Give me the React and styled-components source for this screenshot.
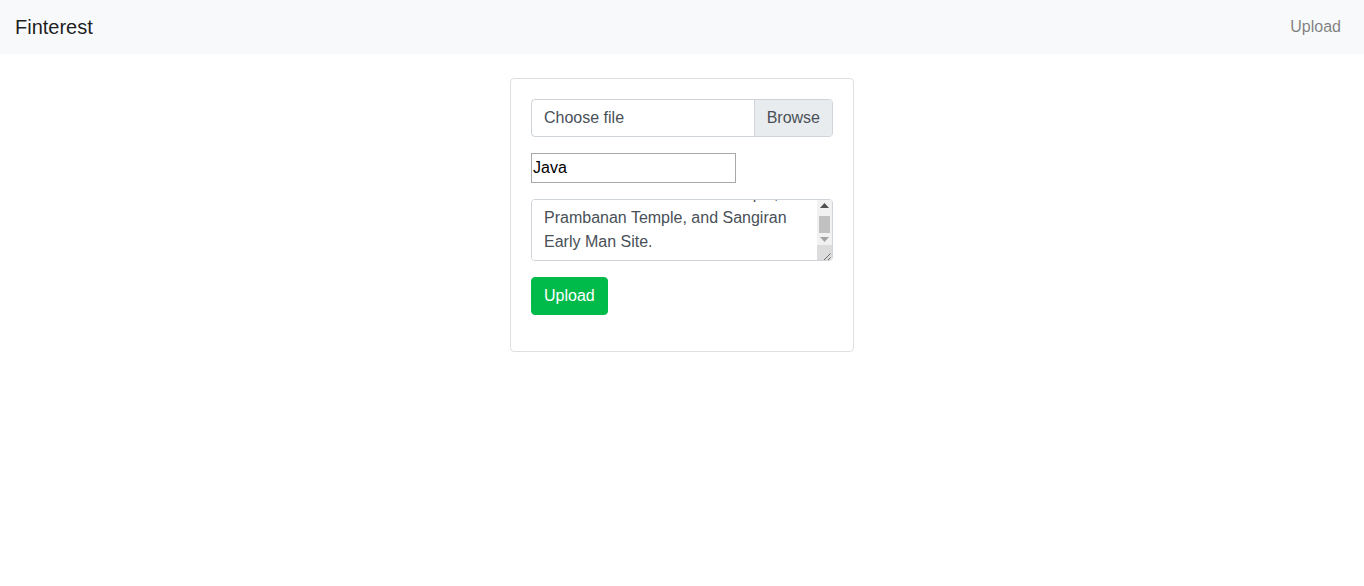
import React, { useEffect, useRef } from 'react';
import styled, { createGlobalStyle } from 'styled-components';

const GlobalStyle = createGlobalStyle`
  * { box-sizing: border-box; }
  body {
    margin: 0;
    background: #fff;
    font-family: "Liberation Sans", Arial, sans-serif;
    font-size: 16px;
    line-height: 1.5;
    color: #212529;
  }
`;

const NavBar = styled.nav`
  height: 54px;
  background: #f8f9fa;
  display: flex;
  align-items: center;
  justify-content: space-between;
  padding: 0 16px 0 15px;
`;

const Brand = styled.a`
  font-size: 20px;
  color: rgba(0, 0, 0, 0.9);
  text-decoration: none;
  line-height: 30px;
`;

const NavLink = styled.a`
  color: rgba(0, 0, 0, 0.5);
  text-decoration: none;
  padding: 8px 7px;
`;

const Main = styled.main`
  display: flex;
  justify-content: center;
  padding-top: 24px;
`;

const Card = styled.div`
  width: 344px;
  border: 1px solid rgba(0, 0, 0, 0.125);
  border-radius: 4px;
  padding: 20px;
`;

const Group = styled.div`
  margin-bottom: ${p => p.$mb ?? 16}px;
`;

const FileBox = styled.label`
  display: flex;
  height: 38px;
  border: 1px solid #ced4da;
  border-radius: 4px;
  overflow: hidden;
  color: #495057;
`;

const FileName = styled.span`
  flex: 1;
  padding: 6px 12px;
  line-height: 24px;
`;

const BrowseBtn = styled.span`
  background: #e9ecef;
  border-left: 1px solid #ced4da;
  padding: 6px 12px;
  line-height: 24px;
`;

const TitleInput = styled.input`
  width: 205px;
  height: 30px;
  border: 1px solid #a9a9a9;
  padding: 2px 1px;
  font: inherit;
  color: #000;
  display: block;
  outline: none;
`;

const AreaWrap = styled.div`
  position: relative;
`;

const TextArea = styled.textarea`
  display: block;
  width: 100%;
  height: 62px;
  padding: 6px 27px 6px 12px;
  border: 1px solid #ced4da;
  border-radius: 4px;
  font: inherit;
  line-height: 24px;
  color: #495057;
  resize: none;
  overflow-y: scroll;
  scrollbar-width: none;
  &::-webkit-scrollbar { display: none; }
`;

const ScrollBar = styled.div`
  position: absolute;
  top: 1px;
  right: 1px;
  bottom: 1px;
  width: 15px;
  display: flex;
  flex-direction: column;
  background: #f1f1f1;
  border-top-right-radius: 3px;
  border-bottom-right-radius: 3px;
  overflow: hidden;
  pointer-events: none;
`;

const ArrowBtn = styled.div`
  height: 11px;
  display: flex;
  align-items: center;
  justify-content: center;
`;

const Track = styled.div`
  flex: 1;
  display: flex;
  flex-direction: column;
  justify-content: flex-end;
  padding: 0 2px 1px;
`;

const Thumb = styled.div`
  height: 17px;
  background: #c1c1c1;
`;

const Corner = styled.div`
  height: 15px;
  background: #dcdcdc;
`;

const SubmitBtn = styled.button`
  background: #00ba4a;
  color: #fff;
  border: 1px solid #00ba4a;
  border-radius: 4px;
  padding: 6px 12px;
  font: inherit;
  line-height: 24px;
  cursor: pointer;
`;

const description =
  'Java is an island of Indonesia. It is home to UNESCO World Heritage Sites such as Borobudur Temple, Prambanan Temple, and Sangiran Early Man Site.';

export default function App() {
  const areaRef = useRef(null);

  useEffect(() => {
    if (areaRef.current) areaRef.current.scrollTop = areaRef.current.scrollHeight;
  }, []);

  return (
    <>
      <GlobalStyle />
      <NavBar>
        <Brand href="#">Finterest</Brand>
        <NavLink href="#">Upload</NavLink>
      </NavBar>
      <Main>
        <Card>
          <form onSubmit={e => e.preventDefault()}>
            <Group>
              <FileBox>
                <FileName>Choose file</FileName>
                <BrowseBtn>Browse</BrowseBtn>
              </FileBox>
            </Group>
            <Group>
              <TitleInput defaultValue="Java" />
            </Group>
            <Group>
              <AreaWrap>
                <TextArea ref={areaRef} rows={2} defaultValue={description} />
                <ScrollBar>
                  <ArrowBtn>
                    <svg width="9" height="5" viewBox="0 0 9 5"><polygon points="0,5 4.5,0 9,5" fill="#505050" /></svg>
                  </ArrowBtn>
                  <Track><Thumb /></Track>
                  <ArrowBtn>
                    <svg width="9" height="5" viewBox="0 0 9 5"><polygon points="0,0 4.5,5 9,0" fill="#a3a3a3" /></svg>
                  </ArrowBtn>
                  <Corner>
                    <svg width="15" height="15" viewBox="0 0 15 15">
                      <path d="M13.5 6.5 L6.5 13.5 M13.5 10.5 L10.5 13.5" stroke="#6b6b6b" strokeWidth="1" />
                    </svg>
                  </Corner>
                </ScrollBar>
              </AreaWrap>
            </Group>
            <Group>
              <SubmitBtn type="submit">Upload</SubmitBtn>
            </Group>
          </form>
        </Card>
      </Main>
    </>
  );
}
